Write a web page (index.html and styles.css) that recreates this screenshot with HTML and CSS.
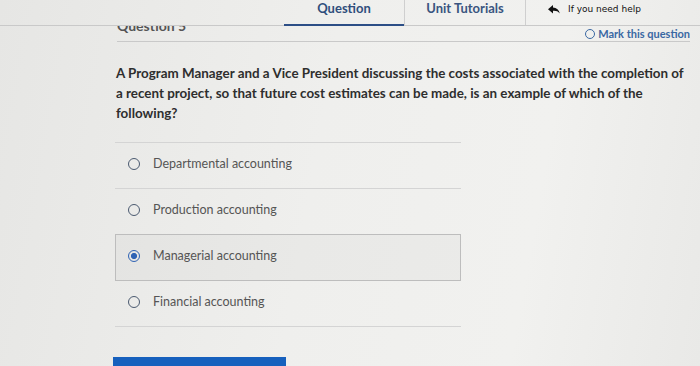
FILE: index.html
```html
<!DOCTYPE html>
<html lang="en">
<head>
    <meta charset="UTF-8">
    <title>Question 5</title>
    <link rel="stylesheet" href="styles.css">
</head>
<body>
    <div class="tabs">
        <div class="tab active">Question</div>
        <div class="tab">Unit Tutorials</div>
        <div class="help">
            <svg width="12" height="9" viewBox="0 0 12 9"><path d="M0 4.2 L5 0 L5 2.4 C8.6 2.6 11 4.6 11.8 8.6 C10 6.2 8 5.6 5 5.8 L5 8.4 Z" fill="#111"/></svg>
            <span>If you need help</span>
        </div>
    </div>

    <div class="header">
        <div class="qnum">Question 5</div>
        <div class="mark"><span class="ring"></span>Mark this question</div>
    </div>

    <p class="prompt">A Program Manager and a Vice President discussing the costs associated with the completion of<br>a recent project, so that future cost estimates can be made, is an example of which of the<br>following?</p>

    <div class="options">
        <div class="option"><span class="radio"></span>Departmental accounting</div>
        <div class="option"><span class="radio"></span>Production accounting</div>
        <div class="option selected"><span class="radio"></span>Managerial accounting</div>
        <div class="option"><span class="radio"></span>Financial accounting</div>
    </div>

    <div class="submit"></div>
</body>
</html>
```

FILE: styles.css
```css
body {
    margin: 0;
    width: 700px;
    height: 366px;
    overflow: hidden;
    font-family: Lato, 'Open Sans', sans-serif;
    color: #333;
    background: linear-gradient(100deg, #e6e6e4 0%, #efefed 45%, #f1f1ef 75%, #e9e9e7 100%);
}
.tabs {
    display: flex;
    height: 25px;
    padding-left: 284px;
    border-bottom: 1px solid #c9c9c9;
}
.tab {
    width: 120px;
    text-align: center;
    font-size: 13px;
    font-weight: bold;
    line-height: 16px;
    color: #2f4e7c;
}
.tab.active {
    border-bottom: 2px solid #2c4e86;
    margin-bottom: -1px;
}
.tab + .tab {
    border-left: 1px solid #cfcfcf;
    border-right: 1px solid #cfcfcf;
    color: #3a5580;
}
.help {
    display: flex;
    align-items: center;
    gap: 8px;
    margin-left: 22px;
    height: 18px;
    font-family: 'DejaVu Sans', cursive;
    font-size: 9px;
    color: #111;
}
.header {
    display: flex;
    justify-content: space-between;
    align-items: flex-end;
    width: 573px;
    height: 15px;
    margin-left: 117px;
    border-bottom: 1px solid #c9c9c9;
    overflow: hidden;
}
.qnum {
    font-size: 14px;
    font-weight: bold;
    line-height: 14px;
    color: #555;
    margin-bottom: 8px;
    height: 7px;
    display: flex;
    align-items: flex-end;
}
.mark {
    display: flex;
    align-items: center;
    gap: 3px;
    font-size: 11px;
    font-weight: bold;
    color: #3a68a3;
    line-height: 13px;
    margin-bottom: 1px;
}
.ring {
    width: 8px;
    height: 8px;
    border: 1.2px solid #3a68a3;
    border-radius: 50%;
}
.prompt {
    margin: 21px 0 0 116px;
    font-size: 13.4px;
    font-weight: bold;
    line-height: 20px;
    color: #2e2e2e;
    white-space: nowrap;
}
.options {
    width: 346px;
    margin: 19px 0 0 115px;
    border-top: 1px solid #d4d4d4;
}
.option {
    box-sizing: border-box;
    display: flex;
    align-items: center;
    gap: 13px;
    height: 46px;
    padding: 0 0 4px 13px;
    border-bottom: 1px solid #d4d4d4;
    font-size: 12.5px;
    color: #555;
}
.option.selected {
    border: 1px solid #bdbdbd;
    background: rgba(0, 0, 0, 0.025);
    height: 47px;
    margin-top: -1px;
    padding-left: 12px;
}
.radio {
    box-sizing: border-box;
    width: 12px;
    height: 12px;
    border: 1.8px solid #4b5a70;
    border-radius: 50%;
}
.selected .radio {
    border-color: #2f63b4;
    background: radial-gradient(circle, #2f63b4 0 2.8px, transparent 3.2px);
}
.submit {
    width: 173px;
    height: 20px;
    margin: 30px 0 0 113px;
    background: #1660bd;
}
```
